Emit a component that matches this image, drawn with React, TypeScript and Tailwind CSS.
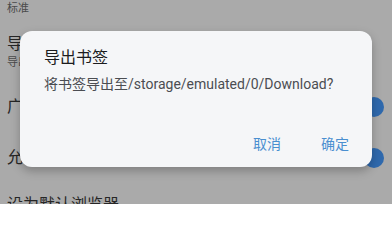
import React from "react";

export default function App() {
  const font = { fontFamily: 'Roboto, "Noto Sans CJK SC", sans-serif' };
  return (
    <div className="relative w-[392px] h-[204px] overflow-hidden bg-[#aaaaaa]" style={font}>
      {/* background page */}
      <div className="flex flex-col pl-[7px] text-[#3c3c3c]">
        <div className="h-[17px] pt-[2px] text-[11px] leading-[14px] text-[#4a4a4a]">标准</div>
        <div className="mt-[17px] text-[16px] leading-[20px] text-[#262626]">导出书签</div>
        <div className="mt-[1px] text-[11px] leading-[16px] text-[#4a4a4a]">导出书签到文件</div>
        <div className="mt-[24px] flex items-center justify-between pr-[8px] h-[24px]">
          <span className="text-[16px] leading-[20px] text-[#262626]">广告拦截</span>
          <span className="w-[20px] h-[20px] rounded-full bg-[#2f69ad]" />
        </div>
        <div className="mt-[27px] flex items-center justify-between pr-[8px] h-[24px]">
          <span className="text-[16px] leading-[20px] text-[#262626]">允许弹出窗口</span>
          <span className="w-[20px] h-[20px] rounded-full bg-[#2f69ad]" />
        </div>
        <div className="mt-[25px] text-[16px] leading-[20px] text-[#262626]">设为默认浏览器</div>
      </div>

      {/* dialog */}
      <div className="absolute left-[20px] top-[31px] w-[352px] h-[136px] rounded-[12px] bg-[#f5f6f8] shadow-[0_4px_10px_rgba(0,0,0,0.25)] flex flex-col pl-[24px] pr-[23px]">
        <div className="mt-[15px] text-[16px] leading-[24px] text-[#1c1c1e]">导出书签</div>
        <div className="mt-[4px] text-[14px] leading-[20px] text-[#4b4d52]">将书签导出至/storage/emulated/0/Download?</div>
        <div className="mt-auto mb-[13px] flex justify-end gap-[40px] text-[14px] leading-[20px] text-[#4a8fd0]">
          <span>取消</span>
          <span>确定</span>
        </div>
      </div>
    </div>
  );
}
